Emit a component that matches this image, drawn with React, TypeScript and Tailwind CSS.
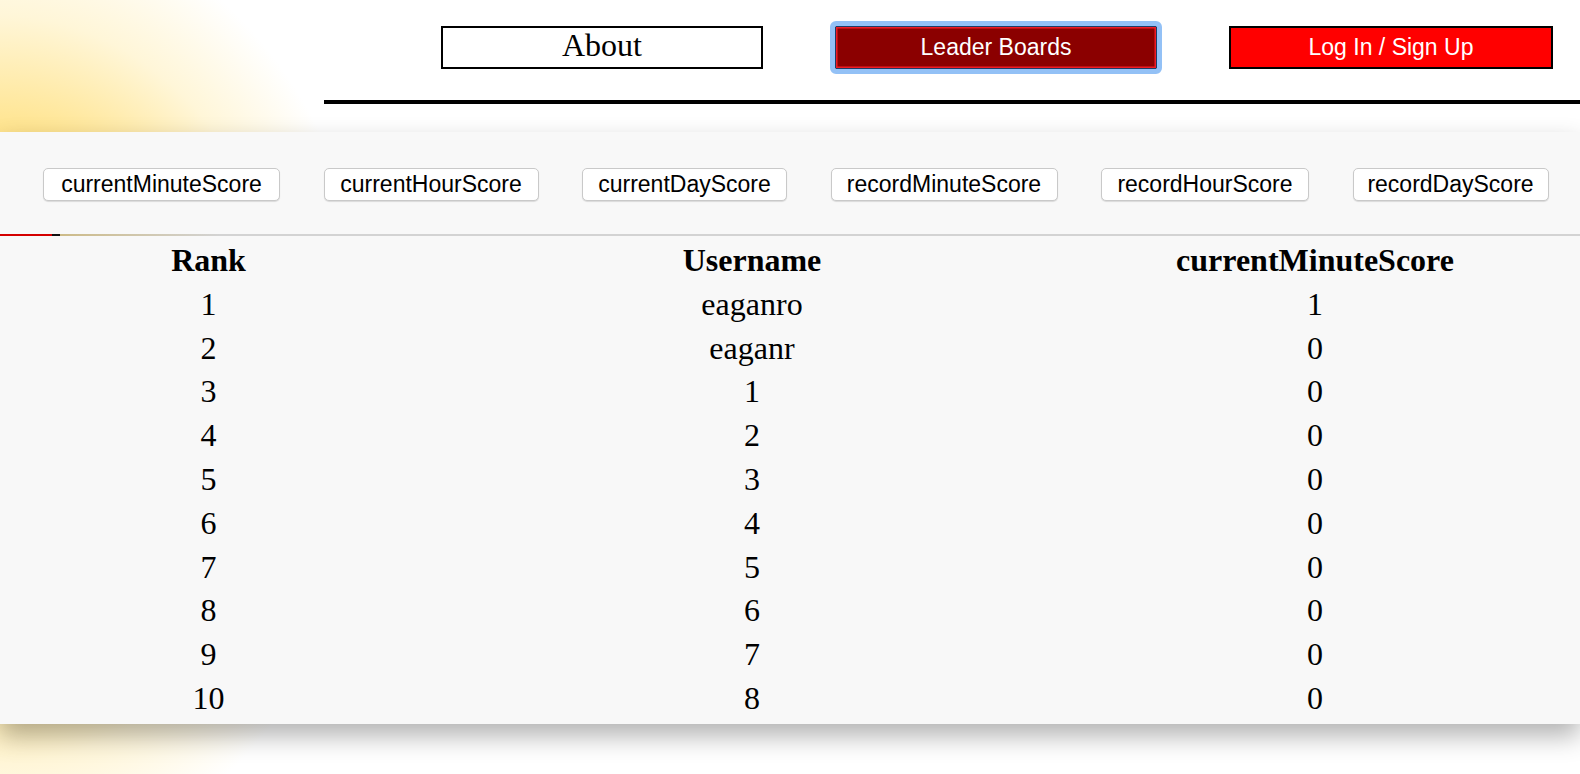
import React, { useState } from 'react';

// button widths measured from the design
const SCORE_TYPES: { key: string; w: string }[] = [
  { key: 'currentMinuteScore', w: 'w-[237px]' },
  { key: 'currentHourScore', w: 'w-[215px]' },
  { key: 'currentDayScore', w: 'w-[205px]' },
  { key: 'recordMinuteScore', w: 'w-[227px]' },
  { key: 'recordHourScore', w: 'w-[208px]' },
  { key: 'recordDayScore', w: 'w-[196px]' },
];

const ROWS: { username: string; score: number }[] = [
  { username: 'eaganro', score: 1 },
  { username: 'eaganr', score: 0 },
  { username: '1', score: 0 },
  { username: '2', score: 0 },
  { username: '3', score: 0 },
  { username: '4', score: 0 },
  { username: '5', score: 0 },
  { username: '6', score: 0 },
  { username: '7', score: 0 },
  { username: '8', score: 0 },
];

const serif = "font-['Liberation_Serif','Times_New_Roman',serif]";
const sans = "font-['Liberation_Sans',Arial,sans-serif]";

export default function App() {
  const [scoreType, setScoreType] = useState('currentMinuteScore');

  return (
    <div className="min-h-[774px] w-full bg-[radial-gradient(ellipse_380px_480px_at_0px_390px,#ffc82e_0%,#ffd862_30%,#ffe48e_54%,#fff6d8_78%,#ffffff_100%)]">
      {/* header */}
      <header className="h-[132px] flex flex-col">
        <nav className="flex pt-[26px] pl-[441px] gap-[72px]">
          <button
            className={`w-[322px] h-[43px] border-2 border-black bg-white text-black text-[32px] leading-none flex items-center justify-center pb-[5px] ${serif}`}
          >
            About
          </button>
          <button
            className={`w-[322px] h-[43px] bg-[#8b0000] border border-[#1e3b66] rounded-[1px] shadow-[inset_0_0_0_1.5px_#ef1c24] outline-[5px] outline-solid outline-[#93c1f6] text-white text-[23px] flex items-center justify-center ${sans}`}
          >
            Leader Boards
          </button>
          <button
            className={`w-[324px] h-[43px] border-2 border-black bg-[#ff0000] text-white text-[23px] flex items-center justify-center ${sans}`}
          >
            Log In / Sign Up
          </button>
        </nav>
        <div className="ml-[324px] mt-[31px] h-[4px] bg-black" />
      </header>

      {/* leaderboard panel */}
      <section className="bg-[#f8f8f8] shadow-[0_12px_24px_rgba(0,0,0,0.3)] pt-[36px] pb-[3px]">
        <div className="flex pl-[43px] gap-[43.5px]">
          {SCORE_TYPES.map((t) => (
            <button
              key={t.key}
              onClick={() => setScoreType(t.key)}
              className={`${t.w} h-[33px] bg-white border border-[#c9c9c9] rounded-[5px] shadow-[0_1px_1px_rgba(0,0,0,0.12)] text-black text-[23px] leading-none text-center ${sans}`}
            >
              {t.key}
            </button>
          ))}
        </div>

        <div className="mt-[33px] h-[2px] bg-[linear-gradient(to_right,#d40000_0px,#d40000_52px,#111111_52px,#111111_60px,#cdbb88_60px,#d3d3d3_220px)]" />

        <div className={`mt-[3px] grid grid-cols-[417px_670px_456px] text-center text-black text-[32px] leading-[43.8px] ${serif}`}>
          <div className="font-bold">Rank</div>
          <div className="font-bold">Username</div>
          <div className="font-bold">{scoreType}</div>
          {ROWS.map((r, i) => (
            <React.Fragment key={i}>
              <div>{i + 1}</div>
              <div>{r.username}</div>
              <div>{r.score}</div>
            </React.Fragment>
          ))}
        </div>
      </section>
    </div>
  );
}
